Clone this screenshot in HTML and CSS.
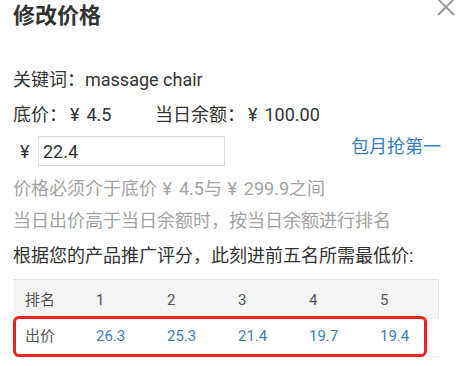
FILE: index.html
```html
<!DOCTYPE html>
<html lang="zh-CN">
<head>
<meta charset="utf-8">
<title>修改价格</title>
<link rel="stylesheet" href="styles.css">
</head>
<body>
<div class="dialog">
  <h1 class="title">修改价格</h1>
  <span class="close" aria-label="关闭">
    <svg width="22" height="22" viewBox="0 0 22 22"><path d="M3 3 L19 19 M19 3 L3 19" stroke="#9a9a9a" stroke-width="2" fill="none"/></svg>
  </span>
  <div class="row row-keyword">关键词：massage chair</div>
  <div class="row row-base">
    <span class="base-price">底价：<span class="cur">¥</span>4.5</span>
    <span>当日余额：<span class="cur">¥</span>100.00</span>
  </div>
  <div class="row-input">
    <span class="yen">¥</span>
    <input class="price-input" type="text" value="22.4">
    <a class="link" href="#">包月抢第一</a>
  </div>
  <div class="row hint hint-1">价格必须介于底价 <span class="cur">¥</span>4.5与 <span class="cur">¥</span>299.9之间</div>
  <div class="row hint hint-2">当日出价高于当日余额时，按当日余额进行排名</div>
  <div class="row row-note">根据您的产品推广评分，此刻进前五名所需最低价:</div>
  <div class="rank-table">
    <div class="rank-head">
      <span class="cell">排名</span>
      <span class="cell">1</span>
      <span class="cell">2</span>
      <span class="cell">3</span>
      <span class="cell">4</span>
      <span class="cell">5</span>
    </div>
    <div class="rank-body">
      <div class="rank-price">
        <span class="cell label">出价</span>
        <span class="cell num">26.3</span>
        <span class="cell num">25.3</span>
        <span class="cell num">21.4</span>
        <span class="cell num">19.7</span>
        <span class="cell num">19.4</span>
      </div>
    </div>
  </div>
</div>
</body>
</html>
```

FILE: styles.css
```css
html, body {
  margin: 0;
  padding: 0;
  background: #fff;
}
body {
  font-family: "Roboto", "Noto Sans CJK SC", sans-serif;
  color: #333;
  width: 465px;
  height: 366px;
  overflow: hidden;
}
.dialog {
  position: relative;
  padding: 0 0 0 13px;
}
.title {
  margin: 0;
  font-size: 22px;
  font-weight: bold;
  line-height: 31px;
  color: #333;
}
.close {
  position: absolute;
  left: 435px;
  top: -4px;
  width: 22px;
  height: 22px;
}
.close svg {
  display: block;
}
.row {
  font-size: 18px;
  line-height: 34px;
  height: 34px;
  white-space: nowrap;
}
.cur {
  display: inline-block;
  margin: 0 7px 0 3px;
}
.row-keyword {
  margin-top: 32px;
}
.row-base {
  margin-top: 1px;
  display: flex;
}
.base-price {
  width: 142px;
}
.row-input {
  margin-top: 4px;
  display: flex;
  align-items: center;
  height: 30px;
  font-size: 18px;
}
.yen {
  width: 18px;
  margin-left: 7px;
}
.price-input {
  box-sizing: border-box;
  width: 187px;
  height: 30px;
  border: 1px solid #dcdcdc;
  box-shadow: inset 0 1px 1px rgba(0,0,0,0.05);
  padding: 0 0 0 4px;
  margin: 0;
  font-family: "Roboto", "Noto Sans CJK SC", sans-serif;
  font-size: 18px;
  color: #333;
  outline: none;
}
.link {
  margin-left: auto;
  margin-right: 24px;
  margin-top: -12px;
  color: #3a7dbf;
  text-decoration: none;
}
.hint {
  color: #a3a3a3;
}
.hint .cur {
  margin: 0 7px 0 1px;
}
.hint-1 {
  margin-top: 6px;
}
.hint-2 {
  margin-top: -2px;
}
.row-note {
  margin-top: 1px;
}
.rank-table {
  margin-top: 6px;
  width: 426px;
  font-size: 15px;
}
.rank-head {
  display: grid;
  grid-template-columns: repeat(6, 71px);
  height: 40px;
  line-height: 40px;
  background: #f4f4f4;
  border-top: 1px solid #e0e0e0;
  border-right: 1px solid #e6e6e6;
  box-sizing: border-box;
  color: #555;
}
.cell {
  padding-left: 12px;
}
.rank-body {
  border-bottom: 1px solid #eeeeee;
  height: 40px;
}
.rank-price {
  box-sizing: border-box;
  width: 414px;
  height: 41px;
  margin-top: -3px;
  border: 3px solid #ee2320;
  border-radius: 6px;
  display: grid;
  grid-template-columns: 68px repeat(5, 71px);
  line-height: 35px;
}
.rank-price .label {
  padding-left: 9px;
  color: #555;
}
.rank-price .num {
  color: #3d7ebf;
}
```
